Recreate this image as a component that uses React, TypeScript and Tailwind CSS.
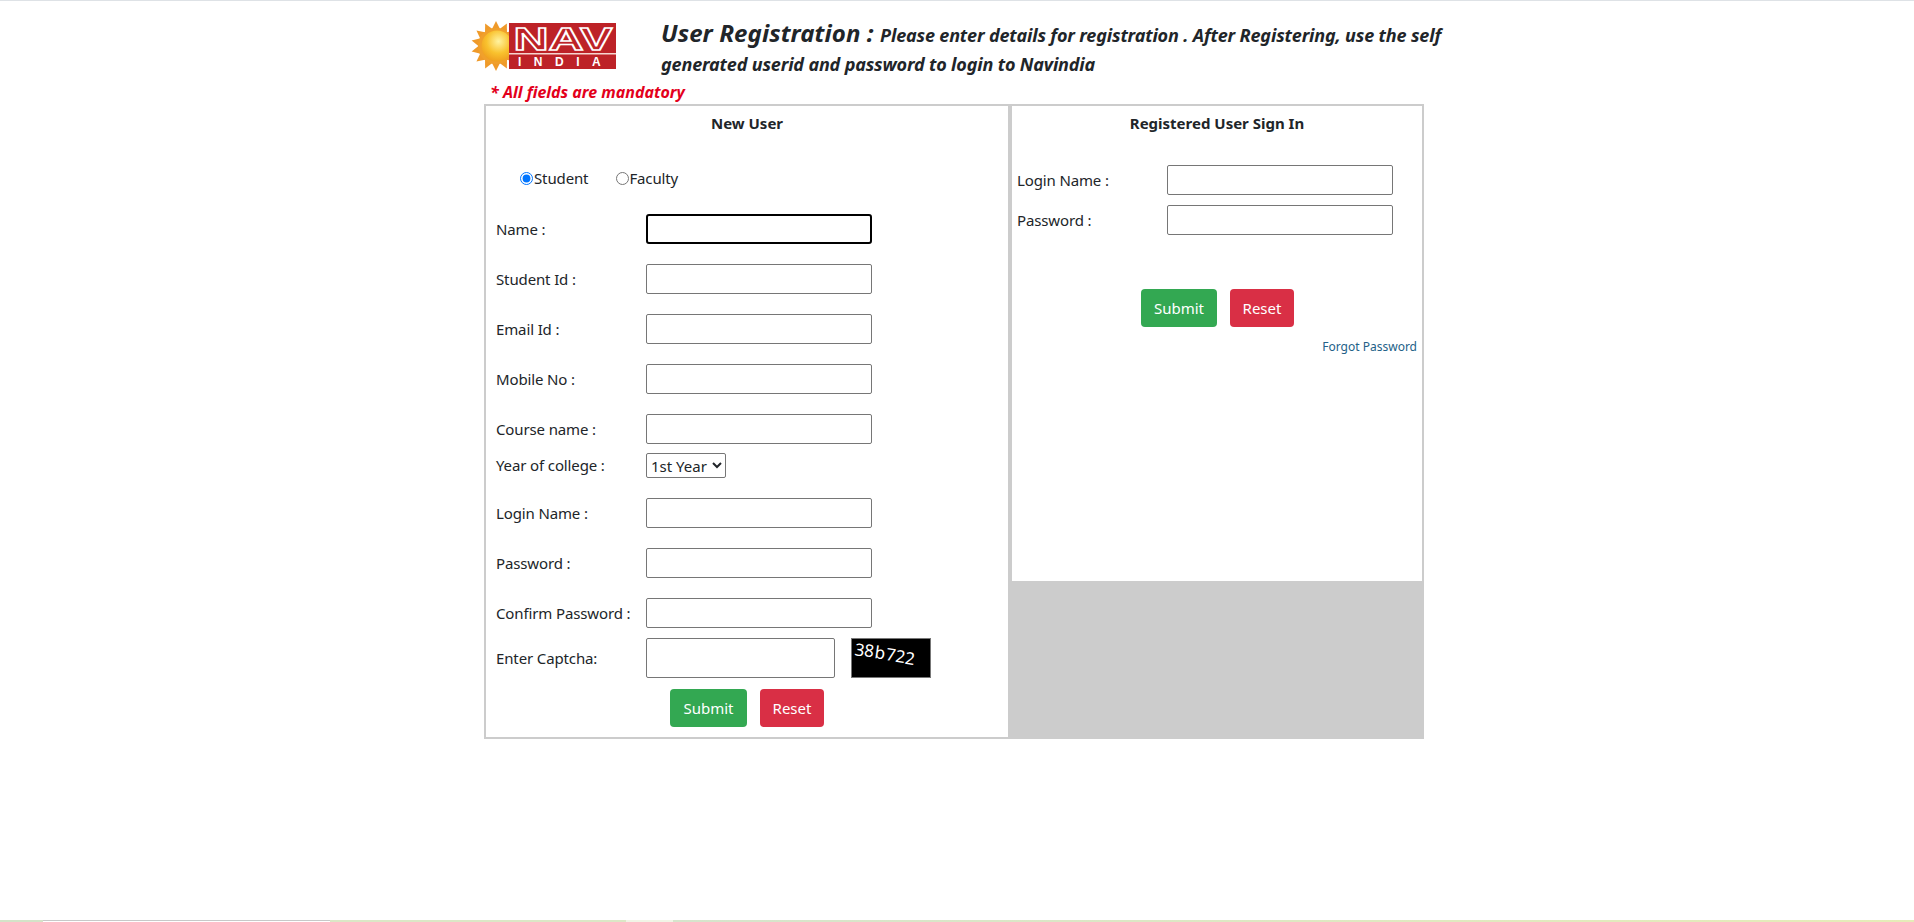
const font = "[font-family:'Noto_Sans',sans-serif]";

function Logo() {
  const rays = Array.from({ length: 14 }, (_, i) => i * (360 / 14));
  return (
    <svg width="150" height="54" viewBox="0 0 150 54" className="block">
      <defs>
        <radialGradient id="sun" cx="0.55" cy="0.35" r="0.7">
          <stop offset="0" stopColor="#fff3a0" />
          <stop offset="0.55" stopColor="#f9c22e" />
          <stop offset="1" stopColor="#ee9a1c" />
        </radialGradient>
      </defs>
      {rays.map((a) => (
        <polygon key={a} points="26,1 31,11 21,11" fill="#ef9a2a" transform={`rotate(${a} 26 26)`} />
      ))}
      <circle cx="26" cy="26" r="18" fill="#f0a02c" />
      <circle cx="27" cy="26" r="15.5" fill="url(#sun)" />
      <rect x="39" y="3" width="107" height="46" fill="#bd2227" />
      <text x="93" y="30" textAnchor="middle" fontFamily="'Liberation Sans',sans-serif" fontWeight="700" fontSize="32" textLength="99" lengthAdjust="spacingAndGlyphs" fill="#bd2227" stroke="#fff" strokeWidth="1.4">NAV</text>
      <rect x="39" y="33" width="107" height="1.5" fill="#f6d5d0" />
      <text x="48" y="46" fontFamily="'Liberation Sans',sans-serif" fontWeight="700" fontSize="12" letterSpacing="12.5" fill="#fff">INDIA</text>
    </svg>
  );
}

function Captcha() {
  return (
    <svg width="80" height="40" viewBox="0 0 80 40" className="block border border-[#777] bg-black">
      <text fontFamily="'Noto Sans',sans-serif" fontSize="18" fill="#fff" x="1 11 22 34 44 54" y="17 18 20 22 24 26" rotate="8 8 8 8 8 8">38b722</text>
    </svg>
  );
}

function Btn({ label, color, w }: { label: string; color: string; w: string }) {
  return (
    <button className={`${color} ${w} h-[38px] rounded-[4px] text-white text-[15px]`}>{label}</button>
  );
}

function Field({ label, mt, focus }: { label: string; mt: string; focus?: boolean }) {
  return (
    <div className={`flex items-center ${mt}`}>
      <label className="w-[150px] shrink-0 text-[15px] tracking-[-0.13px]">{label}</label>
      <input
        className={
          focus
            ? "w-[226px] h-[30px] bg-white border-2 border-black rounded-[3px]"
            : "w-[226px] h-[30px] bg-white border border-[#767676] rounded-[2px]"
        }
      />
    </div>
  );
}

export default function App() {
  return (
    <div className={`min-h-[922px] flex flex-col bg-white text-[#212529] ${font}`}>
      <div className="h-px bg-[#dee2e6]" />
      <div className="flex-1 w-[980px] mx-auto">
        <div className="flex pt-[20px] pl-[3px]">
          <div className="w-[191px] shrink-0 -mt-[1px]"><Logo /></div>
          <h1 className="font-bold italic text-[18px] leading-[29px] tracking-[-0.16px] text-[#212529] w-[790px]">
            <span className="text-[24px] leading-none tracking-[0.08px]">User Registration : </span>
            Please enter details for registration . After Registering, use the self<br />
            generated userid and password to login to Navindia
          </h1>
        </div>
        <p className="ml-[23px] mt-[3px] font-bold italic text-[16px] leading-[20px] text-[#e3001b]">* All fields are mandatory</p>
        <div className="ml-[17px] mt-[2px] w-[940px] h-[635px] flex">
          <div className="w-[524px] shrink-0 border-2 border-r-0 border-[#ccc] pl-[10px] pt-[5px]">
            <h2 className="text-center font-bold text-[15px] leading-[24px] pr-[10px]">New User</h2>
            <div className="flex items-center mt-[31px] ml-[24px] text-[15px] h-[24px] tracking-[-0.13px]">
              <label className="flex items-center mr-[28px]">
                <input type="radio" name="kind" defaultChecked className="m-0 mr-[1px] w-[13px] h-[13px]" />Student
              </label>
              <label className="flex items-center">
                <input type="radio" name="kind" className="m-0 w-[13px] h-[13px]" />Faculty
              </label>
            </div>
            <Field label="Name :" mt="mt-[24px]" focus />
            <Field label="Student Id :" mt="mt-[20px]" />
            <Field label="Email Id :" mt="mt-[20px]" />
            <Field label="Mobile No :" mt="mt-[20px]" />
            <Field label="Course name :" mt="mt-[20px]" />
            <div className="flex items-center mt-[9px]">
              <label className="w-[150px] shrink-0 text-[15px] tracking-[-0.13px]">Year of college :</label>
              <select className="w-[80px] h-[25px] bg-white border border-[#767676] rounded-[2px] text-[15px]">
                <option>1st Year</option>
              </select>
            </div>
            <Field label="Login Name :" mt="mt-[20px]" />
            <Field label="Password :" mt="mt-[20px]" />
            <Field label="Confirm Password :" mt="mt-[20px]" />
            <div className="flex items-center mt-[10px]">
              <label className="w-[150px] shrink-0 text-[15px] tracking-[-0.13px]">Enter Captcha:</label>
              <input className="w-[189px] h-[40px] bg-white border border-[#767676] rounded-[2px]" />
              <div className="ml-[16px]"><Captcha /></div>
            </div>
            <div className="flex gap-[13px] mt-[11px] ml-[174px]">
              <Btn label="Submit" color="bg-[#33a852]" w="w-[77px]" />
              <Btn label="Reset" color="bg-[#d92f45]" w="w-[64px]" />
            </div>
          </div>
          <div className="flex-1 flex flex-col">
            <div className="h-[477px] border-2 border-l-4 border-b-0 border-[#ccc] pl-[5px] pt-[5px] pr-[5px] bg-white">
              <h2 className="text-center font-bold text-[15px] leading-[24px]">Registered User Sign In</h2>
              <div className="flex items-center mt-[30px]">
                <label className="w-[150px] shrink-0 text-[15px] tracking-[-0.13px]">Login Name :</label>
                <input className="w-[226px] h-[30px] border border-[#767676] rounded-[2px]" />
              </div>
              <div className="flex items-center mt-[10px]">
                <label className="w-[150px] shrink-0 text-[15px] tracking-[-0.13px]">Password :</label>
                <input className="w-[226px] h-[30px] border border-[#767676] rounded-[2px]" />
              </div>
              <div className="flex gap-[13px] mt-[54px] ml-[124px]">
                <Btn label="Submit" color="bg-[#33a852]" w="w-[76px]" />
                <Btn label="Reset" color="bg-[#d92f45]" w="w-[64px]" />
              </div>
              <div className="text-right text-[12px] leading-[18px] mt-[11px] text-[#236188]">Forgot Password</div>
            </div>
            <div className="flex-1 bg-[#ccc]" />
          </div>
        </div>
      </div>
      <div className="h-[2px] flex">
        <div className="w-[43px] bg-[#d4e3c8]" />
        <div className="w-[287px] bg-white border-t border-[#c8c8c8]" />
        <div className="w-[296px] bg-[#dbe7c6]" />
        <div className="w-[47px] bg-[#f1f4e6]" />
        <div className="flex-1 bg-gradient-to-r from-[#d6e4cc] to-[#e6ecb8]" />
      </div>
    </div>
  );
}
